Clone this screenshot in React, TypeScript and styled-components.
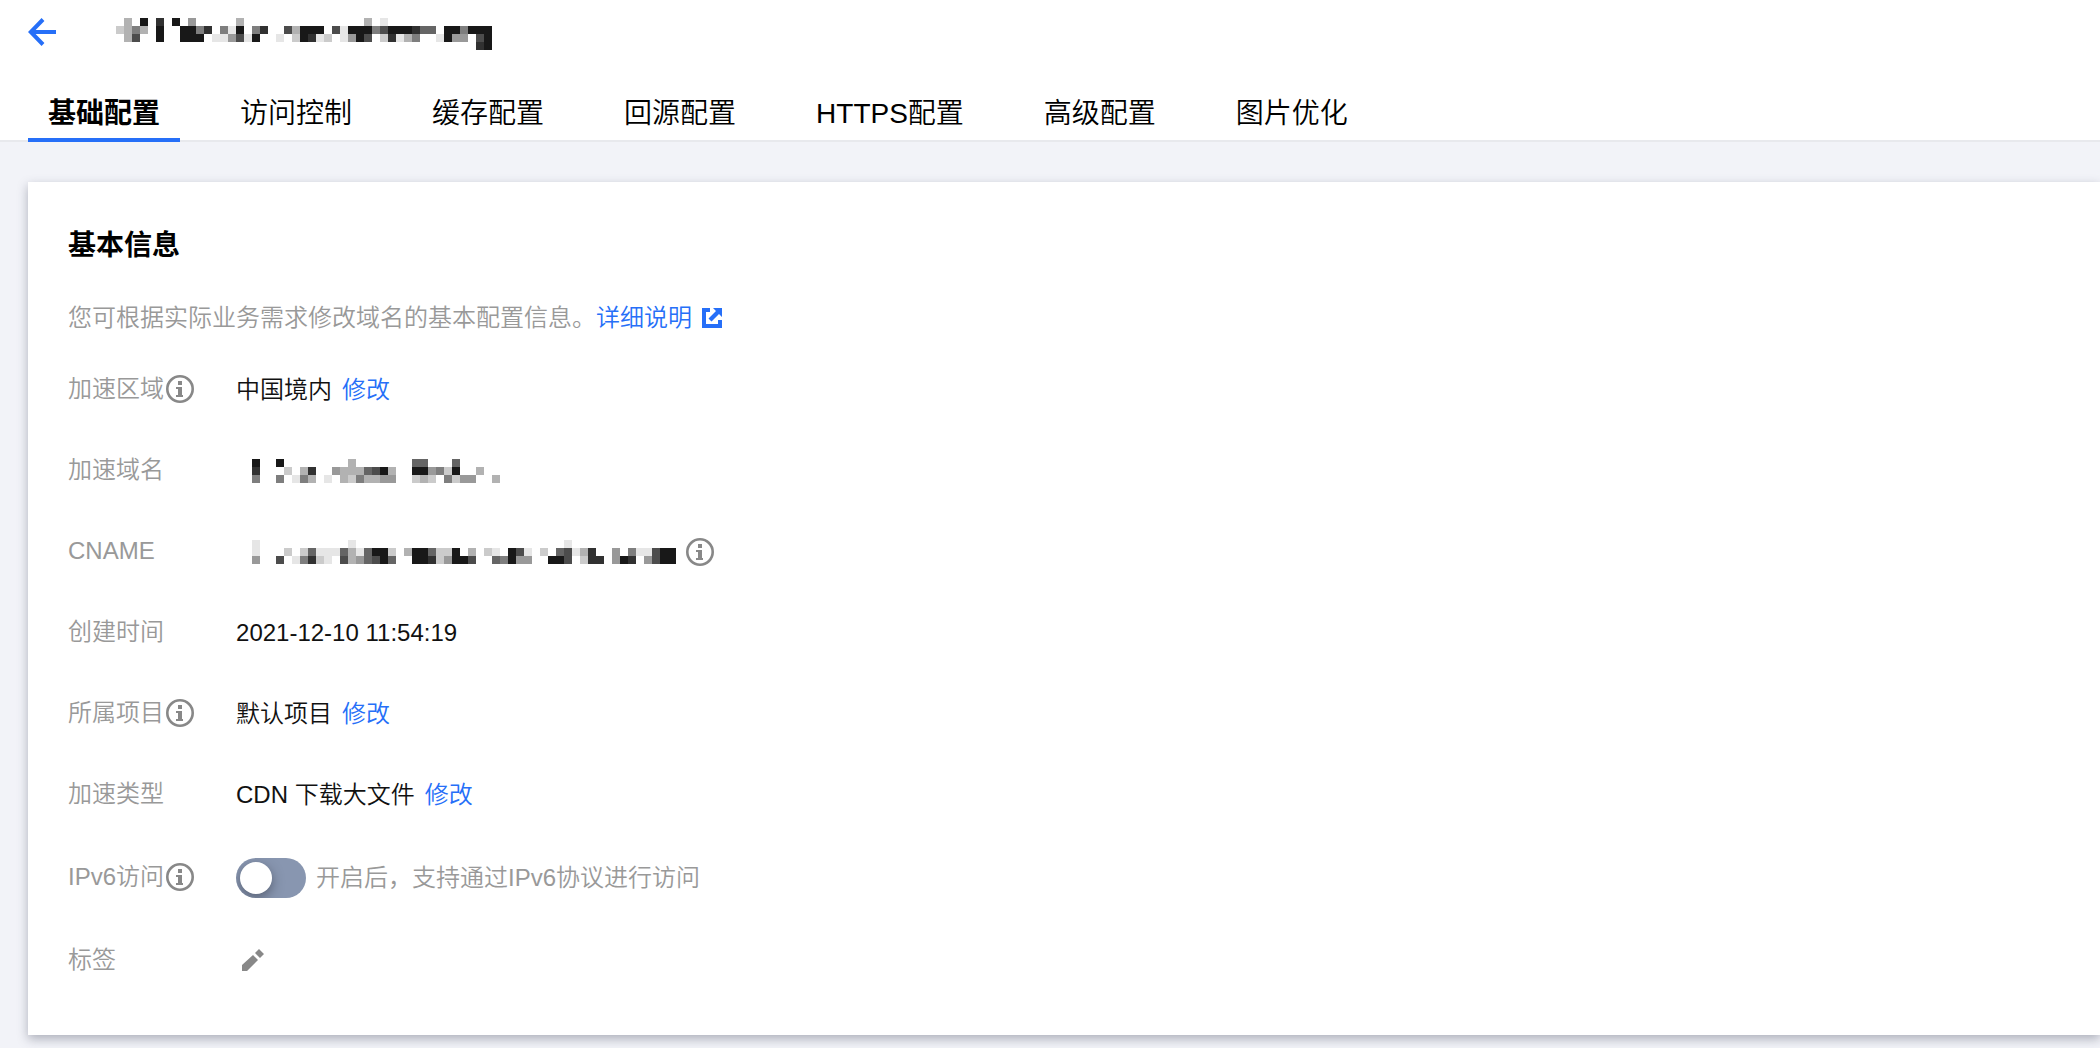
import React from "react";
import styled, { createGlobalStyle } from "styled-components";

const GlobalStyle = createGlobalStyle`
  * { box-sizing: border-box; }
  body {
    margin: 0;
    background: #f2f3f8;
    color: #111;
    font: 350 24px/36px "Liberation Sans", "Noto Sans CJK SC", sans-serif;
  }
`;

const Page = styled.div`
  padding-bottom: 14px;
`;

const Header = styled.header`
  background: #fff;
  border-bottom: 2px solid #e8e9ed;
  padding: 0 28px;
`;

const TitleBar = styled.div`
  display: flex;
  align-items: flex-start;
  height: 64px;
  padding-top: 18px;
  gap: 60px;
`;

const PlainButton = styled.button`
  display: inline-flex;
  align-items: center;
  padding: 0;
  border: 0;
  background: none;
  cursor: pointer;
`;

const Tabs = styled.nav`
  display: flex;
  gap: 40px;
  height: 76px;
`;

const Tab = styled.a<{ $active?: boolean }>`
  padding: 30px 20px 0;
  margin-bottom: -2px;
  border-bottom: 4px solid ${(p) => (p.$active ? "#266ff8" : "transparent")};
  color: #000;
  font-size: 28px;
  line-height: 40px;
  font-weight: ${(p) => (p.$active ? 700 : 350)};
  text-decoration: none;
  white-space: nowrap;
`;

const Card = styled.main`
  margin: 40px 0 0 28px;
  padding: 42px 40px 56px;
  background: #fff;
  box-shadow: 0 4px 10px rgba(54, 58, 80, 0.36);
`;

const Heading = styled.h1`
  margin: 0;
  color: #000;
  font-size: 28px;
  line-height: 44px;
  font-weight: 700;
`;

const Intro = styled.p`
  display: flex;
  align-items: center;
  margin: 32px 0 36px;
  color: #999;
`;

const Link = styled.a`
  display: inline-flex;
  align-items: center;
  gap: 10px;
  color: #266ff8;
  text-decoration: none;
`;

const Info = styled.dl`
  display: grid;
  grid-template-columns: max-content 1fr;
  column-gap: 42px;
  row-gap: 45px;
  margin: 0;
`;

const Label = styled.dt`
  display: flex;
  align-items: center;
  gap: 2px;
  min-height: 36px;
  padding-bottom: 2px;
  line-height: 34px;
  color: #999;
`;

const Value = styled.dd`
  display: flex;
  align-items: center;
  gap: 10px;
  min-height: 36px;
  margin: 0;
`;

const Hint = styled.label`
  color: #999;
`;

const Switch = styled.input`
  appearance: none;
  display: flex;
  align-items: center;
  width: 70px;
  height: 40px;
  margin: 0;
  padding: 4px;
  border-radius: 20px;
  background: #8896b0;
  overflow: hidden;
  cursor: pointer;

  &::before {
    content: "";
    width: 32px;
    height: 32px;
    border-radius: 50%;
    background: #fff;
    box-shadow: 0 4px 12px rgba(40, 44, 56, 0.5);
  }

  &:checked {
    justify-content: flex-end;
    background: #266ff8;
  }
`;

const BackIcon = () => (
  <svg width="28" height="28" viewBox="0 0 28 28" fill="none" stroke="#266ff8" strokeWidth="4">
    <path d="M28 14H4M15 1.500 2.800 14 15 26.500" />
  </svg>
);

const InfoIcon = () => (
  <svg width="28" height="28" viewBox="0 0 28 28" aria-hidden="true">
    <circle cx="14" cy="14" r="12.700" fill="none" stroke="#888" strokeWidth="2.600" />
    <path d="M12 6h4v4h-4zM10 12h6v8h1v2h-7v-2h2v-6h-2z" fill="#888" />
  </svg>
);

const ExternalIcon = () => (
  <svg width="20" height="20" viewBox="0 0 20 20" aria-hidden="true">
    <path d="M0 0h8v4H4v12h12v-4h4v8H0zM11 0h9v9l-3-3-7.500 7.500-3-3 7.500-7.500z" fill="#266ff8" />
  </svg>
);

const PencilIcon = () => (
  <svg width="34" height="28" viewBox="0 0 34 28" aria-hidden="true">
    <path d="M6 24v-6L17 8l5 5-11 11zM19 6l4-4 5 5-4 4z" fill="#888" />
  </svg>
);

const CELL = 8;

/* Each digit is the darkness of one cell: 0 is clear, 9 is near black. */
function Mosaic({ rows, label }: { rows: string[]; label: string }) {
  const width = Math.max(...rows.map((row) => row.length)) * CELL;
  return (
    <svg width={width} height={rows.length * CELL} role="img" aria-label={label} shapeRendering="crispEdges">
      {rows.flatMap((row, y) =>
        [...row].map((cell, x) =>
          cell === "0" ? null : (
            <rect key={`${x}-${y}`} x={x * CELL} y={y * CELL} width={CELL} height={CELL} fill="#181818" fillOpacity={Number(cell) / 9} />
          ),
        ),
      )}
    </svg>
  );
}

const TITLE = [
  "0309080904000003000000000000000301",
  "23530900995805190580073999071999579998660995999",
  "03700900999011471900102981201497028135001944079",
  "00000000000000000000000000000000000000000000089",
];

const DOMAIN = [
  "0090090000000030000000660006",
  "0080002038004333679300994529003",
  "005005015301032533440023205244003",
];

const CNAME = [
  "001000000000001000000000000000000000000001",
  "0010002026111631699203996229030210971020671380040511799",
  "0040070158210734679600998249970065944009970288049804799",
];

const tabs = ["基础配置", "访问控制", "缓存配置", "回源配置", "HTTPS配置", "高级配置", "图片优化"];

export default function App() {
  return (
    <Page>
      <GlobalStyle />
      <Header>
        <TitleBar>
          <PlainButton aria-label="返回"><BackIcon /></PlainButton>
          <Mosaic rows={TITLE} label="域名" />
        </TitleBar>
        <Tabs>
          {tabs.map((tab, i) => (
            <Tab key={tab} href="#" $active={i === 0}>{tab}</Tab>
          ))}
        </Tabs>
      </Header>
      <Card>
        <Heading>基本信息</Heading>
        <Intro>
          您可根据实际业务需求修改域名的基本配置信息。
          <Link href="#">详细说明<ExternalIcon /></Link>
        </Intro>
        <Info>
          <Label>加速区域<InfoIcon /></Label>
          <Value>中国境内<Link href="#">修改</Link></Value>
          <Label>加速域名</Label>
          <Value><Mosaic rows={DOMAIN} label="加速域名" /></Value>
          <Label>CNAME</Label>
          <Value><Mosaic rows={CNAME} label="CNAME" /><InfoIcon /></Value>
          <Label>创建时间</Label>
          <Value>2021-12-10 11:54:19</Value>
          <Label>所属项目<InfoIcon /></Label>
          <Value>默认项目<Link href="#">修改</Link></Value>
          <Label>加速类型</Label>
          <Value>CDN 下载大文件<Link href="#">修改</Link></Value>
          <Label>IPv6访问<InfoIcon /></Label>
          <Value>
            <Switch type="checkbox" id="ipv6" />
            <Hint htmlFor="ipv6">开启后，支持通过IPv6协议进行访问</Hint>
          </Value>
          <Label>标签</Label>
          <Value><PlainButton aria-label="编辑标签"><PencilIcon /></PlainButton></Value>
        </Info>
      </Card>
    </Page>
  );
}
